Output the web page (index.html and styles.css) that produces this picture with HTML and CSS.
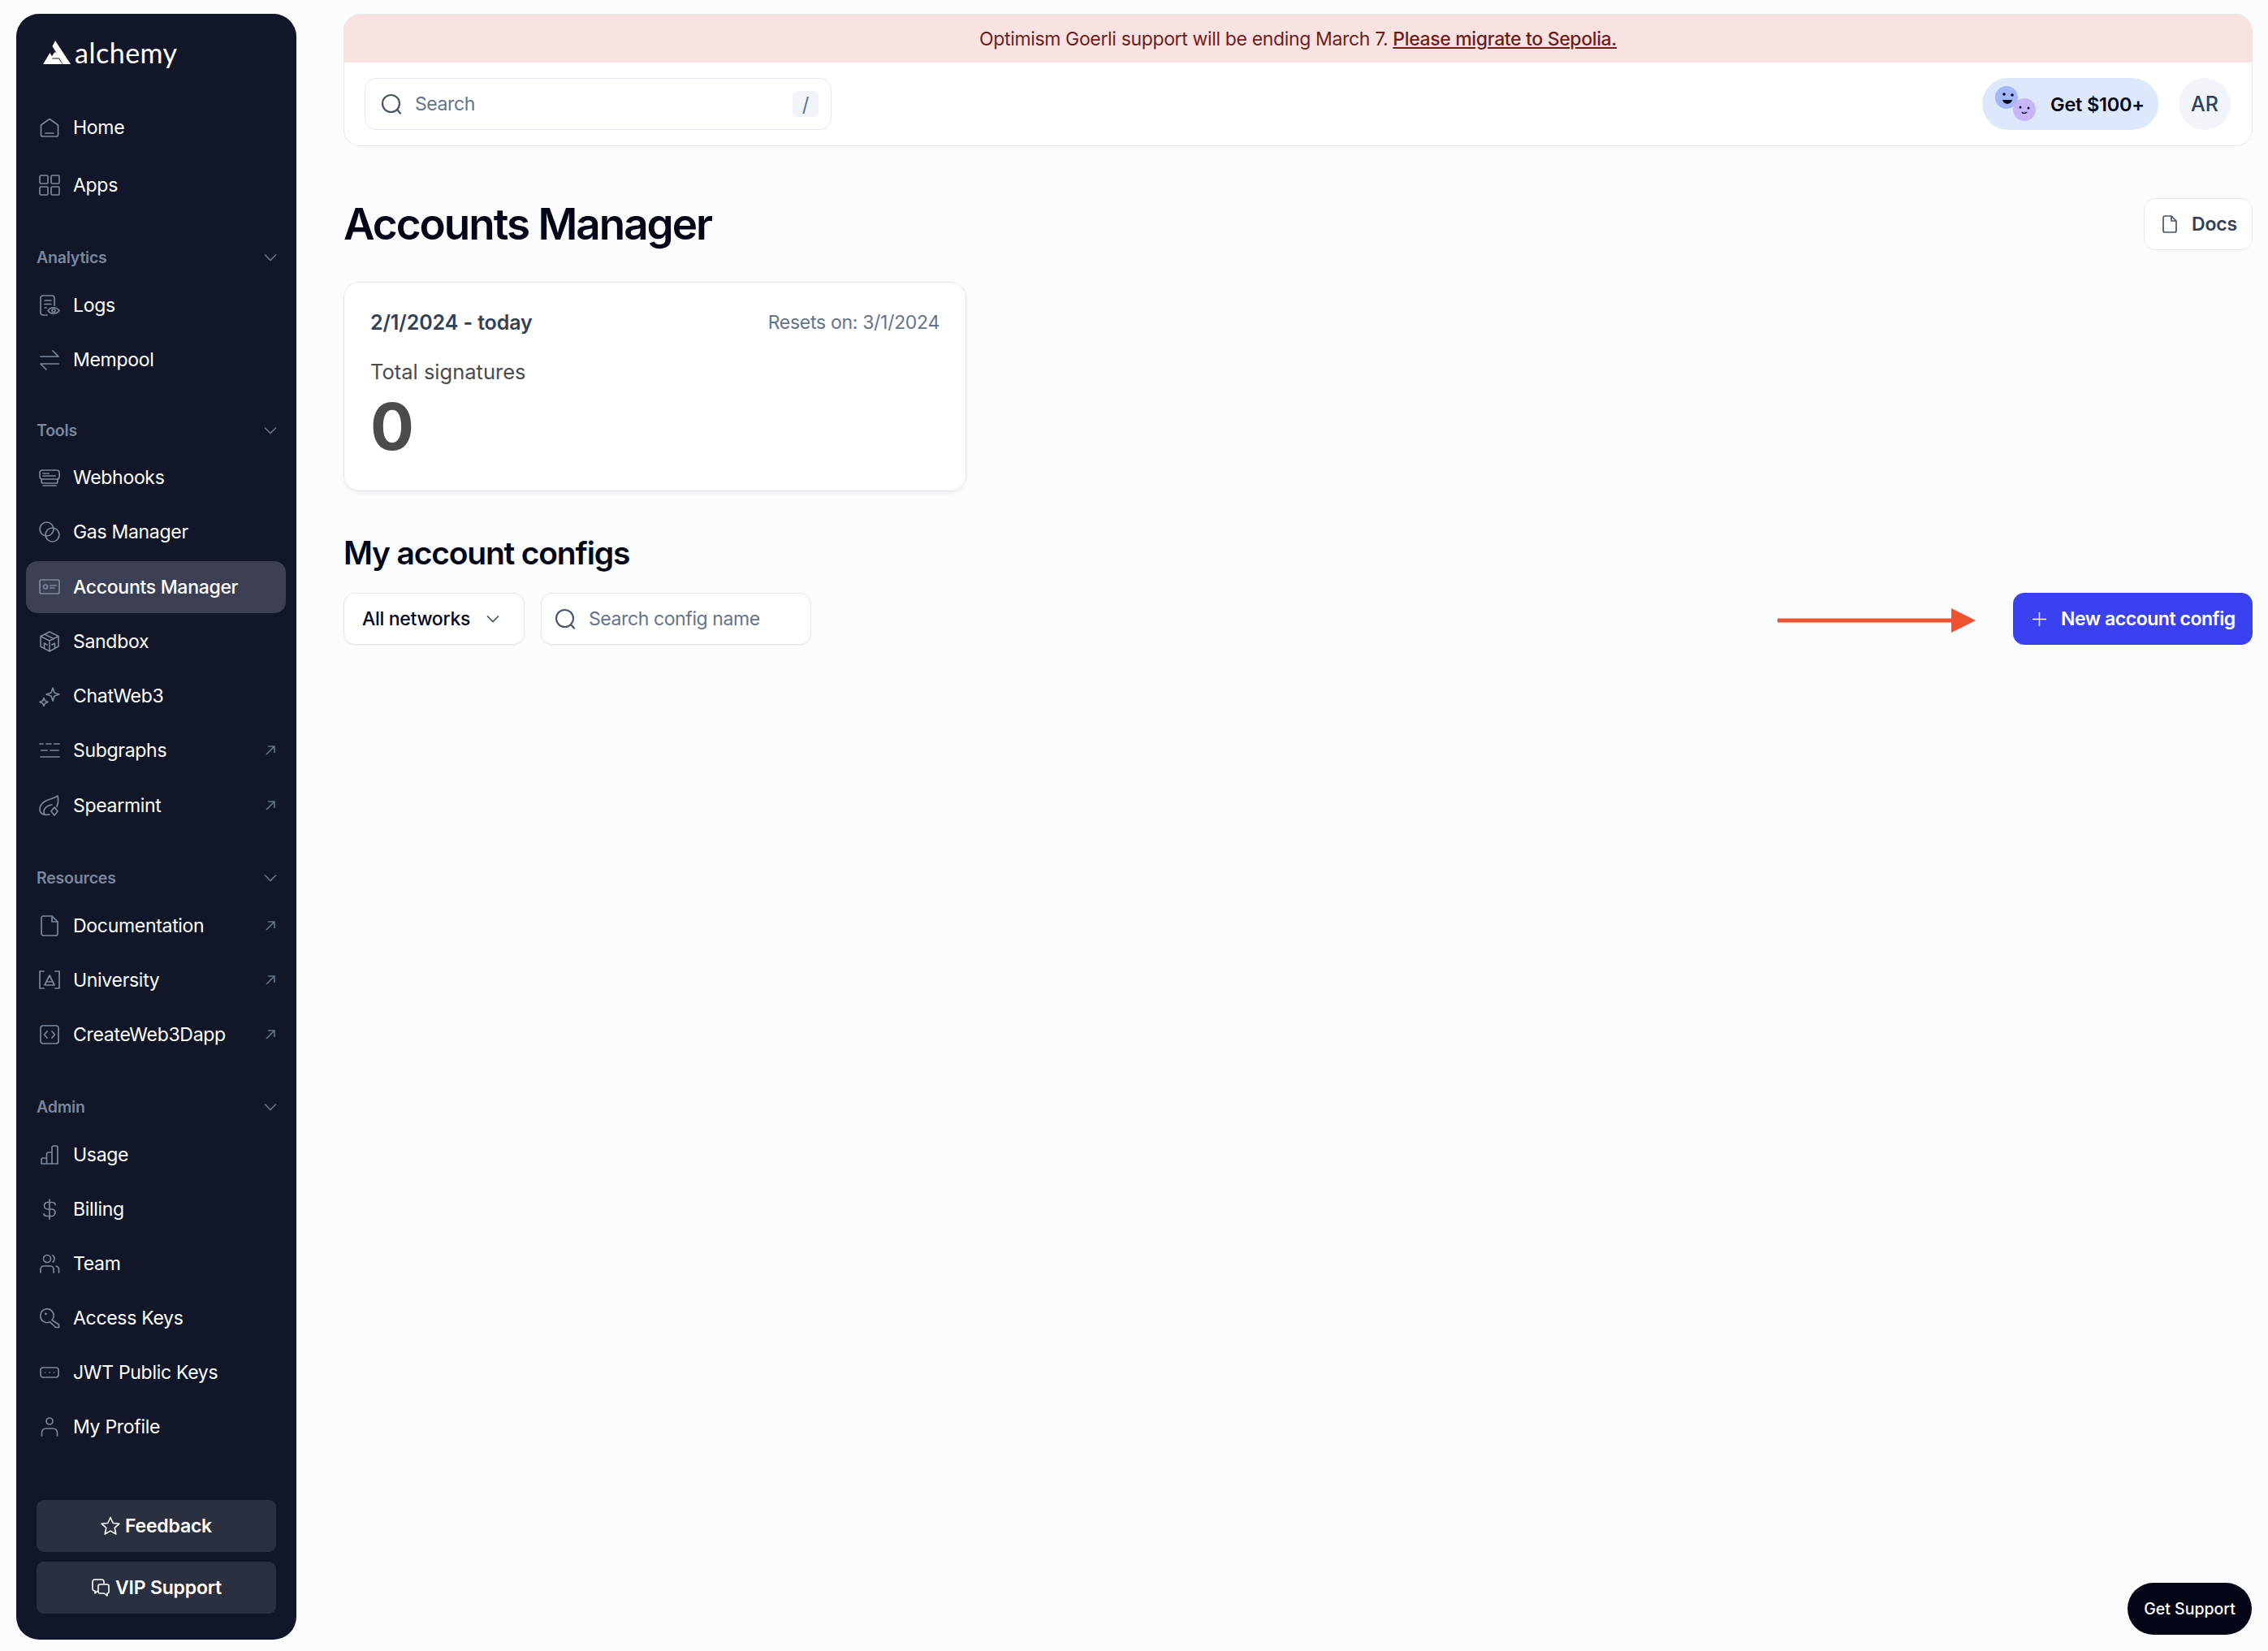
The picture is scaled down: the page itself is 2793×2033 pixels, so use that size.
FILE: index.html
```html
<!DOCTYPE html>
<html lang="en">
<head>
  <meta charset="UTF-8">
  <title>Accounts Manager</title>
  <link rel="stylesheet" href="styles.css">
</head>
<body>

  <aside class="sidebar">
    <div class="logo">
      <svg class="logo-mark" viewBox="0 0 34 29"><path d="M15 0 34 29H24.500L20 21.500H9.500L14 14.500H16L19 19 11.500 7zM8.500 15 12 21 7.500 29H0zM10.500 22.500H19.500L24 29H6.500z" fill="#fff"/></svg>
      <span class="logo-text">alchemy</span>
    </div>

    <nav class="nav-list nav-top">
      <a class="nav-item"><svg class="nav-icon" viewBox="0 0 26 26"><path d="M2.500 10 13 2.500 23.500 10v12a2 2 0 0 1-2 2h-17a2 2 0 0 1-2-2zM8 20h10"/></svg>Home</a>
      <a class="nav-item"><svg class="nav-icon" viewBox="0 0 26 26"><rect x="1" y="1" width="10" height="10" rx="1.500"/><rect x="15" y="1" width="10" height="10" rx="1.500"/><rect x="1" y="15" width="10" height="10" rx="1.500"/><rect x="15" y="15" width="10" height="10" rx="1.500"/></svg>Apps</a>
    </nav>

    <div class="nav-head">Analytics<svg class="chevron" viewBox="0 0 16 10"><path d="M1 1.500 8 8.500 15 1.500"/></svg></div>
    <nav class="nav-list">
      <a class="nav-item"><svg class="nav-icon" viewBox="0 0 26 26"><path d="M10 25H5a3 3 0 0 1-3-3V4a3 3 0 0 1 3-3h11a3 3 0 0 1 3 3v9M7 7h8M7 11.500h8M7 16h2M11 19.500c3.500-5 10-5 14 0-4 5-10.500 5-14 0z"/><circle cx="18" cy="19.500" r="2"/></svg>Logs</a>
      <a class="nav-item"><svg class="nav-icon" viewBox="0 0 26 26"><path d="M2 9H24L17 2M24 18H2L9 25"/></svg>Mempool</a>
    </nav>

    <div class="nav-head">Tools<svg class="chevron" viewBox="0 0 16 10"><path d="M1 1.500 8 8.500 15 1.500"/></svg></div>
    <nav class="nav-list nav-tools">
      <a class="nav-item"><svg class="nav-icon" viewBox="0 0 26 26"><rect x="1" y="4" width="24" height="11" rx="3"/><path d="M5 8h7M5 11h15M3 15v3a2 2 0 0 0 2 2h16a2 2 0 0 0 2-2v-3M5 23h16"/></svg>Webhooks</a>
      <a class="nav-item"><svg class="nav-icon" viewBox="0 0 26 26"><circle cx="9.500" cy="9.500" r="8.500"/><circle cx="16.500" cy="16.500" r="8.500"/></svg>Gas Manager</a>
      <a class="nav-item active"><svg class="nav-icon" viewBox="0 0 26 26"><rect x="1" y="4" width="24" height="17" rx="2"/><circle cx="8" cy="12.500" r="2.500"/><path d="M14 11h7M14 14h5"/></svg>Accounts Manager</a>
      <a class="nav-item"><svg class="nav-icon" viewBox="0 0 26 26"><path d="M13 1 24 6.500V19L13 25 2 19V6.500zM2 6.500 13 12 24 6.500M13 12V25M7 4 18 9.500M6.500 21V15L10 17M19.500 21V15L16 17"/></svg>Sandbox</a>
      <a class="nav-item"><svg class="nav-icon" viewBox="0 0 26 26"><path d="M17 3 19 9 25 11 19 13 17 19 15 13 9 11 15 9zM6 15.500 7.500 19 11 20.500 7.500 22 6 25.500 4.500 22 1 20.500 4.500 19z"/></svg>ChatWeb3</a>
      <a class="nav-item"><svg class="nav-icon" viewBox="0 0 26 26"><path d="M1 5h4M9 5h6M19 5h6M3 13h7M14 13h10M2 21h23"/></svg>Subgraphs<svg class="ext-icon" viewBox="0 0 12 12"><path d="M1 11 11 1M3 1h8v8"/></svg></a>
      <a class="nav-item"><svg class="nav-icon" viewBox="0 0 26 26"><path d="M23 1C16 6 6 5 2 13 0 18 1 23 6 24 8 25 11 24 13 24M23 1C24 6 24 10 22 14M7 24C4 19 8 13 16 12M19 15 23 20 19 25 15 20z"/></svg>Spearmint<svg class="ext-icon" viewBox="0 0 12 12"><path d="M1 11 11 1M3 1h8v8"/></svg></a>
    </nav>

    <div class="nav-head">Resources<svg class="chevron" viewBox="0 0 16 10"><path d="M1 1.500 8 8.500 15 1.500"/></svg></div>
    <nav class="nav-list">
      <a class="nav-item"><svg class="nav-icon" viewBox="0 0 26 26"><path d="M5 1H16L23 8V22.500A2.500 2.500 0 0 1 20.500 25H5.500A2.500 2.500 0 0 1 3 22.500V3A2 2 0 0 1 5 1zM16 1V8H23"/></svg>Documentation<svg class="ext-icon" viewBox="0 0 12 12"><path d="M1 11 11 1M3 1h8v8"/></svg></a>
      <a class="nav-item"><svg class="nav-icon" viewBox="0 0 26 26"><path d="M6 2H1V23H6M20 2H25V23H20M13 7 19 19H7zM9 15H17"/></svg>University<svg class="ext-icon" viewBox="0 0 12 12"><path d="M1 11 11 1M3 1h8v8"/></svg></a>
      <a class="nav-item"><svg class="nav-icon" viewBox="0 0 26 26"><rect x="2" y="2" width="22" height="22" rx="3"/><path d="M10 9 6.500 13 10 17M16 9 19.500 13 16 17"/></svg>CreateWeb3Dapp<svg class="ext-icon" viewBox="0 0 12 12"><path d="M1 11 11 1M3 1h8v8"/></svg></a>
    </nav>

    <div class="nav-head head-admin">Admin<svg class="chevron" viewBox="0 0 16 10"><path d="M1 1.500 8 8.500 15 1.500"/></svg></div>
    <nav class="nav-list">
      <a class="nav-item"><svg class="nav-icon" viewBox="0 0 26 26"><path d="M3 24H23V4a2 2 0 0 0-2-2h-3a2 2 0 0 0-2 2V24M9.500 24V12a2 2 0 0 1 2-2H16M3 24V19a2 2 0 0 1 2-2H9.500"/></svg>Usage</a>
      <a class="nav-item"><svg class="nav-icon" viewBox="0 0 26 26"><path d="M13 1V25M20 7.500C20 5.500 18 4.500 15.500 4.500H11C8.500 4.500 6.500 6 6.500 8.500S8.500 13 11 13H15.500C18 13 20 14.500 20 17S18 21.500 15.500 21.500H10.500C8 21.500 6 20.500 6 18.500"/></svg>Billing</a>
      <a class="nav-item"><svg class="nav-icon" viewBox="0 0 26 26"><circle cx="10" cy="7" r="4.500"/><path d="M2 24V20a4 4 0 0 1 4-4H14a4 4 0 0 1 4 4V24M17 3c2.500 1 2.500 7 0 8M21 16c2 .5 3.500 2 3.500 4V24"/></svg>Team</a>
      <a class="nav-item"><svg class="nav-icon" viewBox="0 0 26 26"><path d="M2 9.500A8 8 0 0 1 16 4.500 8 8 0 0 1 16 15.500L24.500 21V24.500H20.500L13.500 17.800A8 8 0 0 1 2 9.500z"/><circle cx="8.500" cy="8" r=".6"/></svg>Access Keys</a>
      <a class="nav-item"><svg class="nav-icon" viewBox="0 0 26 26"><rect x="2" y="7" width="22" height="12" rx="3"/><path d="M7.500 13h.1M13 13h.1M18.500 13h.1"/></svg>JWT Public Keys</a>
      <a class="nav-item"><svg class="nav-icon" viewBox="0 0 26 26"><circle cx="13" cy="6" r="4"/><path d="M3.500 24V20a5 5 0 0 1 5-5H17.500a5 5 0 0 1 5 5V24"/></svg>My Profile</a>
    </nav>

    <div class="side-buttons">
      <a class="side-btn"><svg class="side-btn-icon" viewBox="0 0 24 24"><path d="M12 1.500 15.200 8.500 22.800 9.300 17.200 14.400 18.800 22 12 18.100 5.200 22 6.800 14.400 1.200 9.300 8.800 8.500z"/></svg>Feedback</a>
      <a class="side-btn"><svg class="side-btn-icon" viewBox="0 0 24 24"><path d="M16 7V5a3 3 0 0 0-3-3H5a3 3 0 0 0-3 3v8a3 3 0 0 0 3 3v3l3-3M11 8H20a2 2 0 0 1 2 2v7a2 2 0 0 1-2 2v3l-3.500-3H11a2 2 0 0 1-2-2V10a2 2 0 0 1 2-2z"/></svg>VIP Support</a>
    </div>
  </aside>

  <main class="main">
    <header class="topbar">
      <div class="banner">Optimism Goerli support will be ending March 7.&nbsp;<a class="banner-link">Please migrate to Sepolia.</a></div>
      <div class="topbar-row">
        <div class="search search-top">
          <svg class="search-icon" viewBox="0 0 26 26"><circle cx="12.500" cy="12.500" r="10.500"/><path d="M20 20 24 24.500"/></svg>
          <span class="search-text">Search</span>
          <kbd class="kbd">/</kbd>
        </div>
        <a class="refer">
          <svg class="faces" viewBox="0 0 52 44">
            <circle cx="14" cy="14" r="14" fill="#a3b8f8"/>
            <circle cx="36" cy="29" r="14" fill="#c7b6f7"/>
            <circle cx="11" cy="10" r="1.800" fill="#020617"/>
            <circle cx="21" cy="11" r="1.800" fill="#020617"/>
            <path d="M9 17H21C20 23 11 24 9 17z" fill="#020617"/>
            <circle cx="31" cy="26" r="1.500" fill="#020617"/>
            <circle cx="41" cy="27" r="1.500" fill="#020617"/>
            <path d="M33 32c1 2 4 2 6 0" fill="none" stroke="#020617" stroke-width="1.500"/>
          </svg>
          Get $100+
        </a>
        <div class="avatar">AR</div>
      </div>
    </header>

    <div class="page-head">
      <h1 class="page-title">Accounts Manager</h1>
      <a class="docs-btn"><svg class="docs-icon" viewBox="0 0 18 22"><path d="M3 1H11L17 7V19A2 2 0 0 1 15 21H3A2 2 0 0 1 1 19V3A2 2 0 0 1 3 1zM11 1V7H17"/></svg>Docs</a>
    </div>

    <section class="stat-card">
      <div class="stat-top">
        <span class="stat-range">2/1/2024 - today</span>
        <span class="stat-reset">Resets on: 3/1/2024</span>
      </div>
      <div class="stat-label">Total signatures</div>
      <div class="stat-value">0</div>
    </section>

    <h2 class="section-title">My account configs</h2>

    <div class="toolbar">
      <div class="select">All networks<svg class="select-chevron" viewBox="0 0 16 10"><path d="M1 1.500 8 8.500 15 1.500"/></svg></div>
      <div class="search search-config">
        <svg class="search-icon" viewBox="0 0 26 26"><circle cx="12.500" cy="12.500" r="10.500"/><path d="M20 20 24 24.500"/></svg>
        <span class="search-text">Search config name</span>
      </div>
      <svg class="callout" viewBox="0 0 244 30"><path d="M0 12.500H214V0L244 15 214 30V17.500H0z"/></svg>
      <a class="new-btn"><svg class="plus" viewBox="0 0 18 18"><path d="M9 0V18M0 9H18"/></svg>New account config</a>
    </div>
  </main>

  <a class="support-btn">Get Support</a>

</body>
</html>
```

FILE: styles.css
```css
* {
  box-sizing: border-box;
}

html, body {
  height: 100%;
}

body {
  margin: 0;
  padding: 17px 19px 14px 20px;
  display: flex;
  gap: 58px;
  overflow: hidden;
  background-color: #fbfcfe;
  color: #020617;
  font-family: Inter, "Liberation Sans", sans-serif;
}

/* sidebar */

.sidebar {
  width: 345px;
  flex-shrink: 0;
  display: flex;
  flex-direction: column;
  padding-bottom: 32px;
  border-radius: 28px;
  background-color: #111729;
  color: #fff;
}

.logo {
  height: 104px;
  padding: 33px 0 0 33px;
  display: flex;
  align-items: flex-start;
  gap: 5px;
}

.logo-mark {
  width: 34px;
  height: 29px;
}

.logo-text {
  font-family: Lato, sans-serif;
  font-size: 34px;
  line-height: 29px;
  letter-spacing: 0.5px;
}

.nav-list {
  display: flex;
  flex-direction: column;
  margin-top: 5px;
}

.nav-top {
  margin-top: 0;
}

.nav-item {
  height: 67px;
  margin: 0 13px 0 12px;
  padding: 0 13px 0 16px;
  display: flex;
  align-items: center;
  gap: 16px;
  border-radius: 14px;
  font-size: 23px;
  font-weight: 400;
  letter-spacing: -0.3px;
}

.nav-top .nav-item {
  height: 71px;
}

.nav-tools {
  margin-top: 6px;
}

.nav-tools .nav-item {
  height: 64px;
  margin-bottom: 3.3px;
}

.nav-item.active {
  background-color: #3d3f55;
  font-weight: 500;
}

.nav-icon {
  width: 26px;
  height: 26px;
  flex-shrink: 0;
  fill: none;
  stroke: #7b879d;
  stroke-width: 1.7;
  stroke-linecap: round;
  stroke-linejoin: round;
}

.ext-icon {
  width: 12px;
  height: 12px;
  margin-left: auto;
  fill: none;
  stroke: #64748b;
  stroke-width: 1.6;
}

.nav-head {
  height: 40px;
  margin-top: 34px;
  padding: 0 24px 0 25px;
  display: flex;
  align-items: center;
  justify-content: space-between;
  color: #7b879d;
  font-size: 19.5px;
  font-weight: 600;
  letter-spacing: -0.2px;
}

.head-admin {
  margin-top: 36px;
}

.chevron {
  width: 16px;
  height: 10px;
  fill: none;
  stroke: #64748b;
  stroke-width: 1.7;
}

.side-buttons {
  margin-top: auto;
  padding: 0 25px;
  display: flex;
  flex-direction: column;
  gap: 12px;
}

.side-btn {
  height: 64px;
  display: flex;
  align-items: center;
  justify-content: center;
  gap: 6px;
  border-radius: 9px;
  background-color: #2a3040;
  font-size: 23px;
  font-weight: 600;
  letter-spacing: -0.2px;
}

.side-btn-icon {
  width: 24px;
  height: 24px;
  fill: none;
  stroke: #fff;
  stroke-width: 1.6;
  stroke-linejoin: round;
}

/* main */

.main {
  flex: 1;
  min-width: 0;
}

.topbar {
  border: 1px solid #e2e8f0;
  border-radius: 20px;
  overflow: hidden;
  background-color: #fff;
}

.banner {
  height: 59px;
  display: flex;
  align-items: center;
  justify-content: center;
  background-color: #f8e3e2;
  color: #711b1b;
  font-size: 23px;
  letter-spacing: -0.35px;
}

.banner-link {
  font-weight: 500;
  text-decoration: underline;
}

.topbar-row {
  height: 102px;
  padding: 0 26px 0 25px;
  display: flex;
  align-items: center;
}

.search {
  height: 64px;
  display: flex;
  align-items: center;
  border: 1px solid #e2e8f0;
  border-radius: 14px;
  background-color: #fff;
}

.search-top {
  width: 575px;
  padding: 0 15px 0 19px;
}

.search-icon {
  width: 26px;
  height: 26px;
  margin-right: 16px;
  fill: none;
  stroke: #475569;
  stroke-width: 2.200;
  stroke-linecap: round;
}

.search-text {
  color: #64748b;
  font-size: 23px;
  letter-spacing: -0.4px;
}

.kbd {
  width: 32px;
  height: 32px;
  margin-left: auto;
  display: flex;
  align-items: center;
  justify-content: center;
  border-radius: 6px;
  background-color: #f1f5f9;
  color: #64748b;
  font-family: Inter, sans-serif;
  font-size: 24px;
}

.refer {
  width: 217px;
  height: 64px;
  margin-left: auto;
  padding-left: 16px;
  display: flex;
  align-items: center;
  gap: 16px;
  border-radius: 32px;
  background-color: #dee8fc;
  font-size: 23.5px;
  font-weight: 600;
  letter-spacing: -0.2px;
}

.faces {
  width: 52px;
  height: 44px;
}

.avatar {
  width: 64px;
  height: 64px;
  margin-left: 25px;
  display: flex;
  align-items: center;
  justify-content: center;
  border-radius: 50%;
  background-color: #f1f5f9;
  color: #334155;
  font-size: 25px;
  font-weight: 500;
}

.page-head {
  height: 64px;
  margin-top: 64px;
  display: flex;
  align-items: center;
  justify-content: space-between;
}

.page-title {
  margin: 0;
  font-size: 53px;
  font-weight: 600;
  letter-spacing: -2px;
}

.docs-btn {
  width: 134px;
  height: 64px;
  padding-left: 22px;
  display: flex;
  align-items: center;
  gap: 18px;
  border: 1px solid #e2e8f0;
  border-radius: 14px;
  background-color: #fff;
  color: #334155;
  font-size: 23px;
  font-weight: 600;
  letter-spacing: -0.2px;
}

.docs-icon {
  width: 18px;
  height: 22px;
  fill: none;
  stroke: #475569;
  stroke-width: 1.700;
}

.stat-card {
  width: 767px;
  height: 258px;
  margin-top: 39px;
  padding: 31px 32px 0;
  border: 1px solid #e2e8f0;
  border-radius: 20px;
  background-color: #fff;
  box-shadow: 0 2px 4px rgba(15, 23, 42, 0.06);
}

.stat-top {
  height: 36px;
  display: flex;
  align-items: center;
  justify-content: space-between;
}

.stat-range {
  color: #334155;
  font-size: 25px;
  font-weight: 600;
  letter-spacing: -0.1px;
}

.stat-reset {
  color: #64748b;
  font-size: 23px;
  letter-spacing: -0.3px;
}

.stat-label {
  margin-top: 25px;
  color: #4b4b4b;
  font-size: 25.5px;
  line-height: 36px;
}

.stat-value {
  margin-top: 9px;
  color: #4b4b4b;
  font-size: 80px;
  font-weight: 700;
  line-height: 80px;
}

.section-title {
  height: 50px;
  margin: 51px 0 0;
  font-size: 39px;
  font-weight: 600;
  line-height: 50px;
  letter-spacing: -1.2px;
}

.toolbar {
  margin-top: 24px;
  display: flex;
  align-items: center;
}

.select {
  width: 223px;
  height: 64px;
  padding: 0 22px;
  display: flex;
  align-items: center;
  justify-content: space-between;
  border: 1px solid #e2e8f0;
  border-radius: 14px;
  background-color: #fff;
  box-shadow: 0 1px 2px rgba(15, 23, 42, 0.05);
  color: #020617;
  font-size: 23px;
  font-weight: 500;
  letter-spacing: -0.3px;
}

.select-chevron {
  width: 16px;
  height: 10px;
  margin-right: 8px;
  fill: none;
  stroke: #475569;
  stroke-width: 1.700;
}

.search-config {
  width: 333px;
  margin-left: 20px;
  padding: 0 16px;
  box-shadow: 0 1px 2px rgba(15, 23, 42, 0.05);
}

.callout {
  width: 244px;
  height: 30px;
  margin-top: 4px;
  margin-left: auto;
  fill: #ee5230;
}

.new-btn {
  width: 295px;
  height: 64px;
  margin-left: 46px;
  padding-left: 24px;
  display: flex;
  align-items: center;
  gap: 18px;
  border-radius: 14px;
  background-color: #3a41f0;
  color: #fff;
  font-size: 23px;
  font-weight: 600;
  letter-spacing: -0.45px;
}

.plus {
  width: 17px;
  height: 17px;
  stroke: #fff;
  stroke-width: 1.500;
}

/* floats over the page */

.support-btn {
  position: fixed;
  right: 20px;
  bottom: 20px;
  width: 153px;
  height: 64px;
  display: flex;
  align-items: center;
  justify-content: center;
  border-radius: 32px;
  background-color: #020617;
  color: #fff;
  font-size: 19.5px;
  font-weight: 500;
}
```
